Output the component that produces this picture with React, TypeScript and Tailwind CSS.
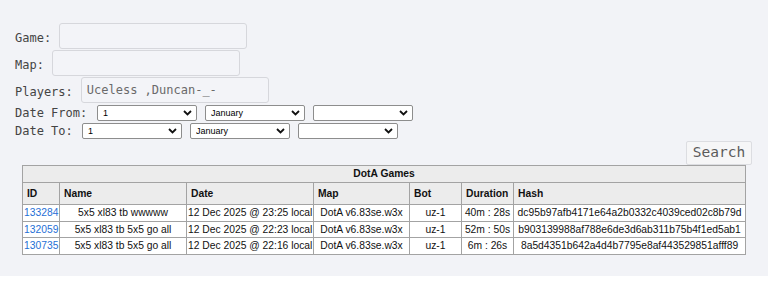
import React from 'react';

const mono = { fontFamily: '"DejaVu Sans Mono", "Liberation Mono", monospace' };
const sans = { fontFamily: '"Liberation Sans", Arial, sans-serif' };

const days = ['1'];
const months = ['January'];

function Chevron() {
  return (
    <svg width="9" height="6" viewBox="0 0 9 6" className="pointer-events-none absolute right-[5px] top-[5px]">
      <path d="M1 1 L4.5 4.5 L8 1" fill="none" stroke="#111" strokeWidth="1.8" />
    </svg>
  );
}

function DateSelect({ value }: { value: string }) {
  return (
    <div className="relative h-[16px] w-[100px]">
      <select
        defaultValue={value}
        className="block h-[16px] w-[100px] appearance-none rounded-[2px] border border-[#8d8d8d] bg-white py-0 pl-[5px] text-[9px] leading-[14px] text-black outline-none"
        style={sans}
      >
        {value && <option value={value}>{value}</option>}
        {!value && <option value=""></option>}
      </select>
      <Chevron />
    </div>
  );
}

function TextField({ value, label }: { value?: string; label: string }) {
  return (
    <div className="flex h-[27px] items-start">
      <span className="mt-[6px] text-[12px] text-[#444]" style={mono}>
        {label}
      </span>
      <input
        defaultValue={value}
        className="ml-[8px] h-[26px] w-[188px] rounded-[3px] border border-[#d6d7dc] bg-[#f3f4f8] px-[5px] text-[12px] text-[#6a6a6a] outline-none"
        style={mono}
      />
    </div>
  );
}

const games = [
  { id: '133284', name: '5x5 xl83 tb wwwww', date: '12 Dec 2025 @ 23:25 local', map: 'DotA v6.83se.w3x', bot: 'uz-1', duration: '40m : 28s', hash: 'dc95b97afb4171e64a2b0332c4039ced02c8b79d' },
  { id: '132059', name: '5x5 xl83 tb 5x5 go all', date: '12 Dec 2025 @ 22:23 local', map: 'DotA v6.83se.w3x', bot: 'uz-1', duration: '52m : 50s', hash: 'b903139988af788e6de3d6ab311b75b4f1ed5ab1' },
  { id: '130735', name: '5x5 xl83 tb 5x5 go all', date: '12 Dec 2025 @ 22:16 local', map: 'DotA v6.83se.w3x', bot: 'uz-1', duration: '6m : 26s', hash: '8a5d4351b642a4d4b7795e8af443529851afff89' },
];

export default function App() {
  const cell = 'border border-[#a3a3a3] px-[1px] whitespace-nowrap';
  const head = 'border border-[#a3a3a3] pl-[4px] text-left font-bold';

  return (
    <div className="min-h-[284px] bg-white">
      <div className="h-[276px] bg-[#f2f3f7] pl-[15px] pt-[23px]">
        <TextField label="Game:" />
        <TextField label="Map:" />
        <TextField label="Players:" value="Uceless ,Duncan-_-" />

        <div className="mt-[1px] flex h-[16px] items-center">
          <span className="w-[82px] text-[12px] leading-[16px] text-[#444]" style={mono}>
            Date From:
          </span>
          <div className="flex gap-[8px]">
            <DateSelect value={days[0]} />
            <DateSelect value={months[0]} />
            <DateSelect value="" />
          </div>
        </div>

        <div className="mt-[2px] flex h-[16px] items-center">
          <span className="w-[67px] text-[12px] leading-[16px] text-[#444]" style={mono}>
            Date To:
          </span>
          <div className="flex gap-[8px]">
            <DateSelect value={days[0]} />
            <DateSelect value={months[0]} />
            <DateSelect value="" />
          </div>
        </div>

        <div className="mt-[2px] flex justify-end pr-[16px]">
          <button
            className="h-[24px] w-[66px] rounded-[2px] border border-[#dcdde1] bg-[#f6f6f7] text-[14.5px] text-[#5b5b5b]"
            style={mono}
          >
            Search
          </button>
        </div>

        <table
          className="ml-[7px] w-[723px] table-fixed border-collapse border border-[#a3a3a3] text-[10.3px] text-[#111]"
          style={sans}
        >
          <colgroup>
            <col className="w-[37px]" />
            <col className="w-[127px]" />
            <col className="w-[127px]" />
            <col className="w-[96px]" />
            <col className="w-[52px]" />
            <col className="w-[52px]" />
            <col className="w-[232px]" />
          </colgroup>
          <thead>
            <tr className="h-[17px] bg-[#ececec]">
              <th colSpan={7} className="border border-[#a3a3a3] text-center font-bold">
                DotA Games
              </th>
            </tr>
            <tr className="h-[22px] bg-[#ececec]">
              <th className={head}>ID</th>
              <th className={head}>Name</th>
              <th className={head}>Date</th>
              <th className={head}>Map</th>
              <th className={head}>Bot</th>
              <th className={head}>Duration</th>
              <th className={head}>Hash</th>
            </tr>
          </thead>
          <tbody className="bg-white">
            {games.map((g) => (
              <tr key={g.id} className="h-[16.5px]">
                <td className={`${cell} text-left`}>
                  <a href="#" className="text-[#1f6fd6]">
                    {g.id}
                  </a>
                </td>
                <td className={`${cell} text-center`}>{g.name}</td>
                <td className={`${cell} text-center`}>{g.date}</td>
                <td className={`${cell} text-center`}>{g.map}</td>
                <td className={`${cell} text-center`}>{g.bot}</td>
                <td className={`${cell} text-center`}>{g.duration}</td>
                <td className={`${cell} text-center`}>{g.hash}</td>
              </tr>
            ))}
          </tbody>
        </table>
      </div>
    </div>
  );
}
